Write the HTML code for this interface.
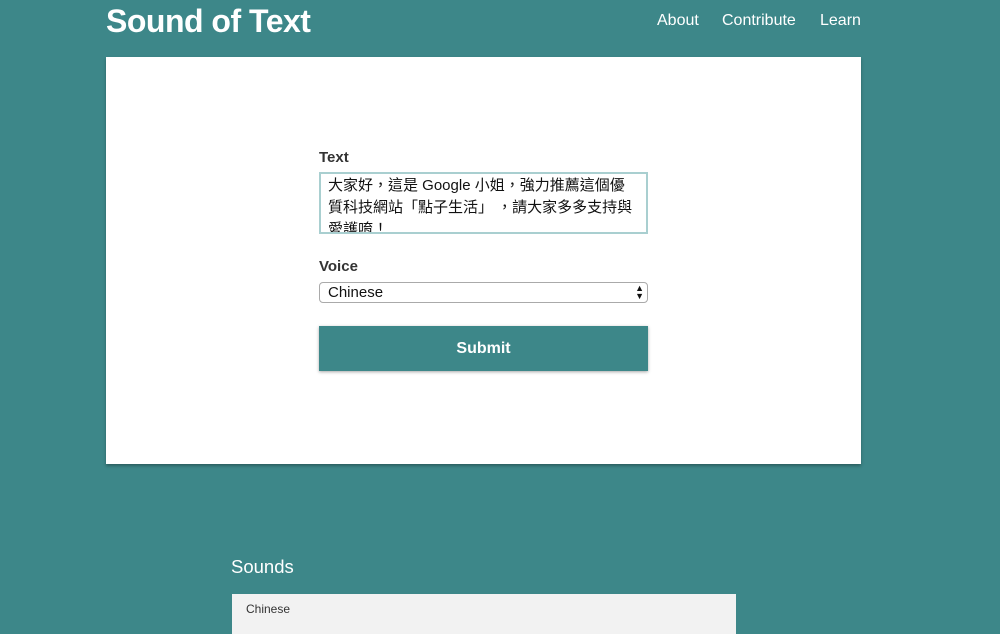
<!DOCTYPE html>
<html><head><meta charset="utf-8"><style>
*{box-sizing:border-box;margin:0;padding:0}
body{width:1000px;height:625px;overflow:hidden;background:#3d8789;font-family:"Liberation Sans","Noto Sans CJK TC",sans-serif;position:relative}
.logo{position:absolute;left:106px;top:3px;color:#fff;font-weight:bold;font-size:32px;letter-spacing:-0.5px}
.nav{position:absolute;top:12px;color:#fff;font-size:16px}
.card{position:absolute;left:106px;top:57px;width:755px;height:407px;background:#fff;box-shadow:0 2px 3px rgba(0,0,0,.3)}
.lbl{position:absolute;left:319px;color:#333;font-size:15px;font-weight:bold}
.ta{position:absolute;left:319px;top:172px;width:329px;height:62px;border:2px solid #a9cfd0;padding:1px 7px;font-size:15px;line-height:22px;color:#111;overflow:hidden;white-space:nowrap}
.sel{position:absolute;left:319px;top:282px;width:329px;height:21px;border:1px solid #aaa;border-radius:4px;padding:0 8px;font-size:15px;line-height:19px;color:#111}
.sel span{position:absolute;right:3px;top:1px;font-size:9px;line-height:8px}
.btn{position:absolute;left:319px;top:326px;width:329px;height:45px;background:#3d8789;color:#fff;font-weight:bold;font-size:16px;text-align:center;line-height:45px;box-shadow:0 1px 3px rgba(0,0,0,.35)}
.sh{position:absolute;left:231px;top:556px;color:#fff;font-size:18.5px}
.sb{position:absolute;left:232px;top:594px;width:504px;height:40px;background:#f2f2f2;font-size:12px;color:#333;padding:8px 14px}
</style></head><body>
<div class="logo">Sound of Text</div>
<div class="nav" style="left:657px">About</div>
<div class="nav" style="left:722px">Contribute</div>
<div class="nav" style="left:820px">Learn</div>
<div class="card"></div>
<div class="lbl" style="top:149px">Text</div>
<div class="ta">大家好，這是 Google 小姐，強力推薦這個優<br>質科技網站「點子生活」 ，請大家多多支持與<br>愛護唷！</div>
<div class="lbl" style="top:258px">Voice</div>
<div class="sel">Chinese<span>▲<br>▼</span></div>
<div class="btn">Submit</div>
<div class="sh">Sounds</div>
<div class="sb">Chinese</div>
</body></html>
